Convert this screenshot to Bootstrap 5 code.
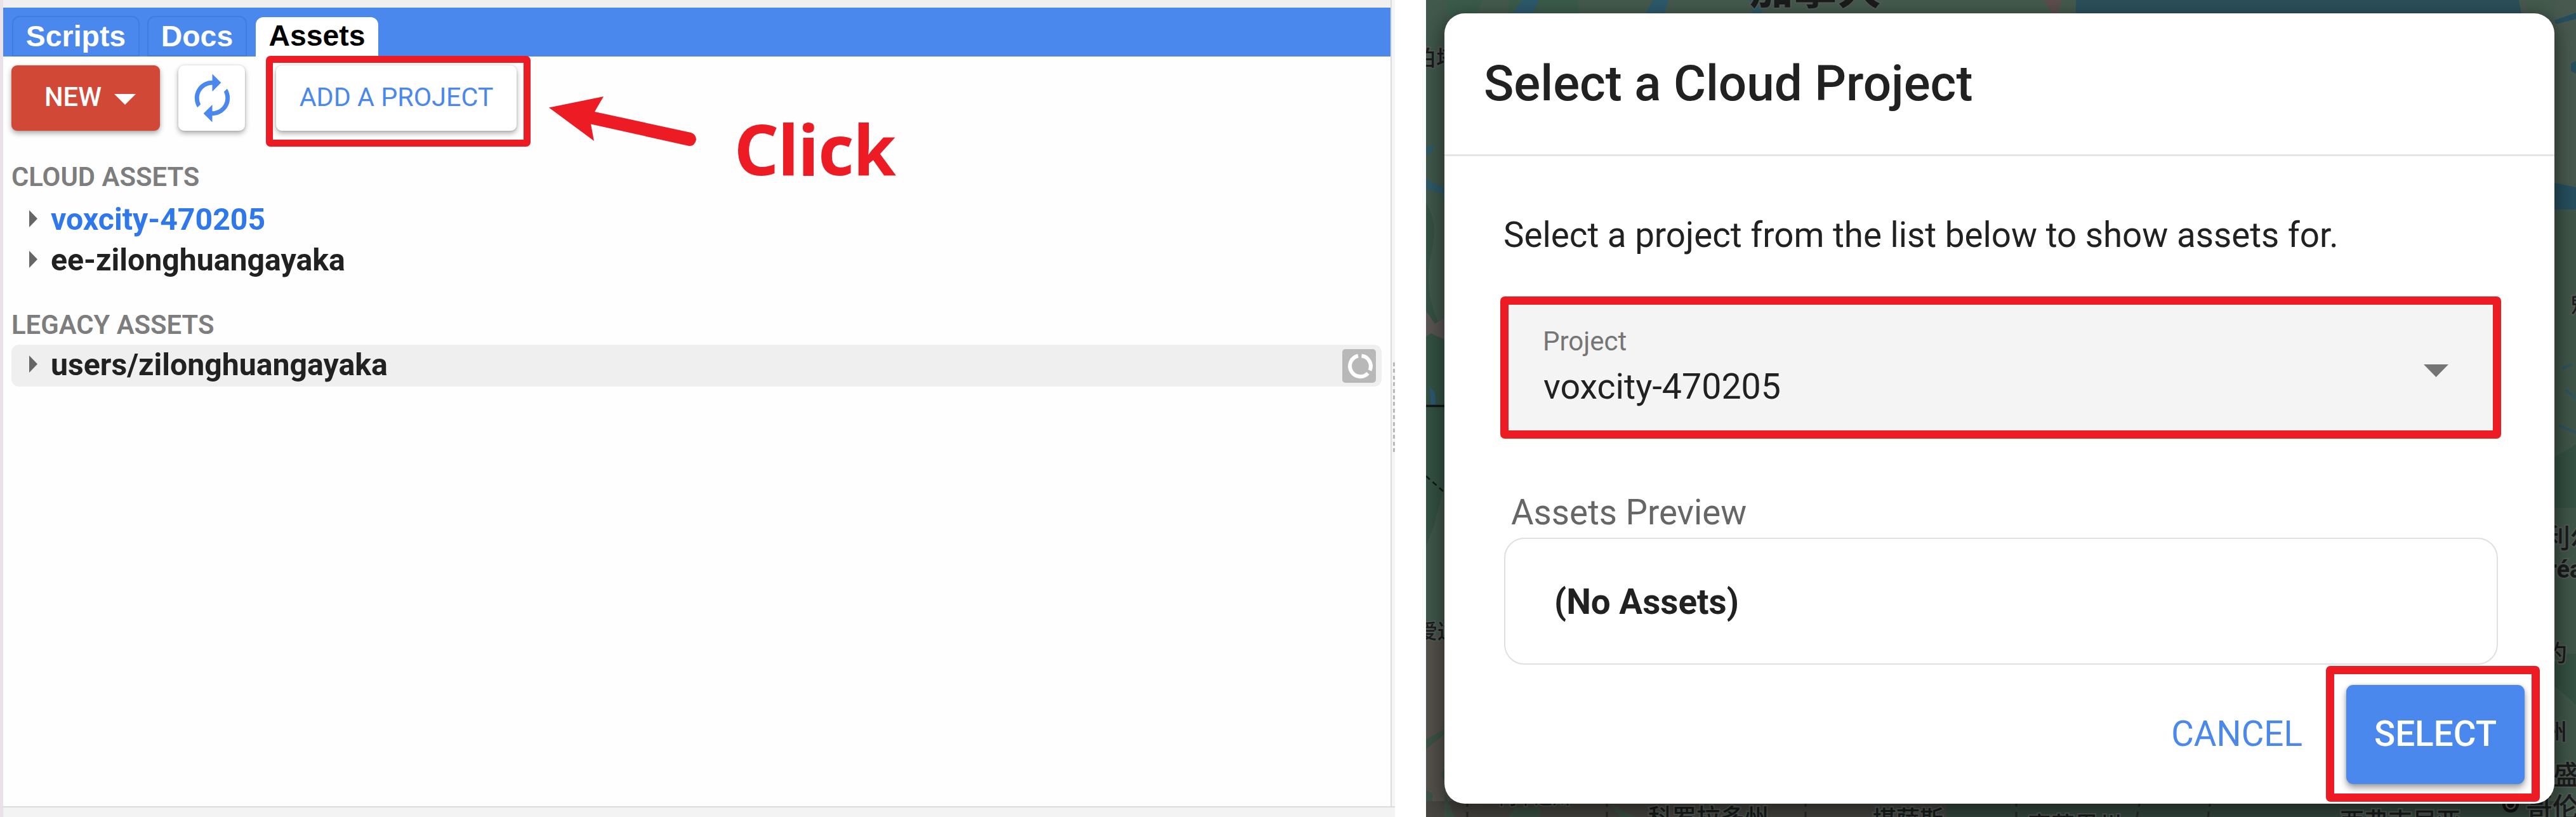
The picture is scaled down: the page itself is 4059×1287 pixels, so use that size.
<!DOCTYPE html>
<html lang="en">
<head>
<meta charset="utf-8">
<title>Add a Cloud Project</title>
<link href="https://cdn.jsdelivr.net/npm/bootstrap@5.3.0/dist/css/bootstrap.min.css" rel="stylesheet">
<style>
  body { font-family: Roboto, "Noto Sans CJK SC", sans-serif; color: #212121; background: #fff; width: 4059px; height: 1287px; overflow: hidden; }
  .split { gap: 49px; height: 1287px; }

  /* left: code editor side panel */
  .side { width: 2198px; background: #fefefe; border-left: 5px solid #ebe1e8; }
  .side-main { border-right: 2px solid #dcdcdc; }
  .top-strip { height: 12px; background: #f0f0f0; }
  .tab-bar { height: 77px; background: #4a88ee; padding-left: 14px; }
  .tab { height: 64px; border: 2px solid #3f7de4; border-radius: 12px 12px 0 0; color: #fff; font: 700 46.4px/60px "Liberation Sans", sans-serif; text-align: center; }
  .tab-scripts { width: 201px; margin-right: 12px; }
  .tab-docs { width: 157px; margin-right: 14px; }
  .tab-assets { width: 193px; height: 62px; background: #fff; border-color: #fff; color: #000; line-height: 55px; }
  .tools { padding: 14px 0 0 13px; }
  .tool { height: 103px; border: 0; border-radius: 9px; padding: 0 0 4px; background: #fff; box-shadow: 0 4px 8px rgba(0,0,0,.33), 0 0 3px rgba(0,0,0,.14); font-size: 41.3px; line-height: 1; color: #4a88ee; }
  .tool-new { width: 234px; background: #d14836; color: #fff; gap: 20px; margin-right: 29px; padding-left: 14px; font-size: 41.8px; font-weight: 500; }
  .tool-sync { width: 105px; padding: 0 0 0 2px; margin-right: 49px; }
  .tool-add { width: 379px; padding-bottom: 2px; }
  .marker { position: absolute; border: 11px solid #ed1c24; border-radius: 7px; pointer-events: none; }
  .marker-add { left: -16px; top: -15px; width: 417px; height: 143px; }
  .group-label { height: 50px; line-height: 52px; font-size: 41.8px; font-weight: 600; color: #7d7d7d; padding-left: 13px; }
  .cloud-label { margin-top: 47px; }
  .cloud-list { margin-top: 12px; }
  .legacy-label { margin-top: 43px; }
  .legacy-list { margin-top: 7px; }
  .asset { height: 64px; margin: 0 14px 0 13px; padding-left: 28px; padding-bottom: 2px; font-size: 48.2px; font-weight: 700; line-height: 1; border-radius: 12px; color: #212121; }
  .asset svg { margin: -4px 21px 0 0; }
  .asset-current { color: #2f78ec; }
  .asset-hover { height: 66px; background: #efefef; padding-right: 9px; }
  .asset-hover .reload { margin: 2px 0 0 auto; }
  .grip { width: 5px; background: #f5f5f5; padding-top: 571px; }
  .grip i { height: 143px; width: 3px; margin-left: 2px; background: repeating-linear-gradient(#b9b9b9 0 6px, #f5f5f5 6px 10.4px); }
  .bottom-strip { height: 17px; background: #f3f3f3; border-top: 2px solid #dcdcdc; }
  .note { position: absolute; left: 860px; top: 140px; width: 560px; height: 160px; }
  .note text { font: 700 109px "Noto Sans", sans-serif; letter-spacing: -1px; }

  /* right: map with dialog */
  .map-side { width: 1812px; background: #42574b; padding: 21px 34px 21px 29px; }
  .map { position: absolute; left: 0; top: 0; }
  .map text { font-family: "Noto Sans CJK SC", Roboto, sans-serif; fill: #191c1b; stroke: #525b56; stroke-width: 4px; paint-order: stroke; font-weight: 500; }
  .dialog { position: relative; width: 1749px; height: 1245px; background: #fff; border-radius: 32px; box-shadow: 0 10px 30px 6px rgba(0,0,0,.42); }
  .dialog-head { height: 225px; border-bottom: 3px solid #e4e4e4; padding: 0 0 1px 62px; font-size: 78.2px; font-weight: 500; line-height: 1; }
  .dialog-body { padding: 94px 89px 0 95px; }
  .hint { height: 60px; line-height: 60px; font-size: 54.7px; margin: 0; text-indent: -2px; }
  .field { margin-top: 74px; height: 211px; background: #f4f4f4; padding: 39px 78px 0 60px; }
  .field-name { height: 50px; line-height: 50px; font-size: 42px; color: #757575; }
  .field-value { margin-top: 17px; height: 60px; line-height: 60px; font-size: 55.5px; padding-left: 1px; }
  .marker-field { left: -7px; top: -7px; width: 1577px; height: 224px; border-width: 13px; }
  .preview-name { margin: 92px 0 0 10px; height: 60px; line-height: 60px; font-size: 54.6px; color: #666; }
  .preview { margin-top: 10px; height: 200px; border: 2px solid #e0e0e0; border-radius: 32px; padding: 2px 0 0 77px; margin-left: -1px; font-size: 54.8px; font-weight: 700; }
  .dialog-foot { padding: 32px 47px 0 0; }
  .act { height: 156px; border: 0; background: none; padding: 0 0 2px; font-size: 54.8px; line-height: 1; color: #4a88ee; }
  .act-cancel { margin-right: 69px; }
  .act-select { width: 281px; background: #4a88ee; color: #fff; border-radius: 11px; font-weight: 500; box-shadow: 0 6px 11px rgba(0,0,0,.38), 0 0 4px rgba(0,0,0,.15); }
  .marker-select { left: -32px; top: -30px; width: 337px; height: 214px; border-width: 13px; }
</style>
</head>
<body>
<div class="split d-flex">

  <section class="side d-flex flex-column position-relative">
    <div class="d-flex flex-grow-1">
      <div class="side-main flex-grow-1">
        <div class="top-strip"></div>
        <nav class="tab-bar d-flex align-items-end">
          <div class="tab tab-scripts">Scripts</div>
          <div class="tab tab-docs">Docs</div>
          <div class="tab tab-assets">Assets</div>
        </nav>
        <div class="tools d-flex">
          <button class="tool tool-new d-flex align-items-center justify-content-center">NEW
            <svg class="mt-2" width="34" height="17"><path d="M0 0H34L17 17Z" fill="#fff"/></svg>
          </button>
          <button class="tool tool-sync d-flex align-items-center justify-content-center" aria-label="Refresh">
            <svg width="83" height="83" viewBox="0 0 24 24"><path fill="#4a88ee" d="M12 4V1l4 4-4 4V6c-3.31 0-6 2.69-6 6 0 1.010.25 1.970.7 2.800l-1.460 1.460C4.460 15.030 4 13.570 4 12c0-4.420 3.580-8 8-8zm0 14c3.310 0 6-2.690 6-6 0-1.010-.25-1.970-.7-2.800l1.460-1.460C19.540 8.970 20 10.430 20 12c0 4.420-3.580 8-8 8v3l-4-4 4-4v3z"/></svg>
          </button>
          <div class="position-relative">
            <button class="tool tool-add">ADD A PROJECT</button>
            <div class="marker marker-add"></div>
          </div>
        </div>

        <div class="group-label cloud-label">CLOUD ASSETS</div>
        <div class="cloud-list">
          <div class="asset asset-current d-flex align-items-center"><svg width="13" height="27"><path d="M0 0L13 13.5L0 27Z" fill="#666"/></svg>voxcity-470205</div>
          <div class="asset d-flex align-items-center"><svg width="13" height="27"><path d="M0 0L13 13.5L0 27Z" fill="#666"/></svg>ee-zilonghuangayaka</div>
        </div>
        <div class="group-label legacy-label">LEGACY ASSETS</div>
        <div class="legacy-list">
          <div class="asset asset-hover d-flex align-items-center"><svg width="13" height="27"><path d="M0 0L13 13.5L0 27Z" fill="#666"/></svg>users/zilonghuangayaka
            <svg class="reload" width="53" height="53"><rect width="53" height="53" rx="5" fill="#b8b8b8"/><path d="M30.500 10.500A16.500 16.500 0 0 1 43.500 33.500M40.500 38A16.500 16.500 0 1 1 25 10.500" fill="none" stroke="#fff" stroke-width="6"/></svg>
          </div>
        </div>
      </div>
      <div class="grip"><i class="d-block"></i></div>
    </div>
    <div class="bottom-strip"></div>

    <svg class="note" viewBox="865 140 560 160">
      <path d="M865 169.500L951 152L937 176L1089 209Q1097 212 1097 220Q1095 230 1086 230L931 195.500L936 222Z" fill="#ed1c24"/>
      <text x="1157" y="276" fill="#ed1c24">Click</text>
    </svg>
  </section>

  <section class="map-side position-relative">
    <svg class="map" width="1812" height="1287">
      <rect width="1812" height="1287" fill="#455a4e"/>
      <path d="M0 0H90L60 60L130 90V0H240V30H0Z" fill="#3b5b4b"/>
      <path d="M0 0H34V1287H0Z" fill="#41584c"/>
      <path d="M0 320Q20 350 8 400T16 500L30 540V760L12 830L0 860Z" fill="#345244"/>
      <path d="M0 490L14 510L30 500V535L18 530L8 525L0 530Z" fill="#5a5654"/>
      <path d="M6 610L14 618L16 640H8Z" fill="#2b5a72"/>
      <path d="M0 232L12 228L10 240L0 244ZM0 282L34 298V308L0 298Z" fill="#2d5a68"/>
      <path d="M0 1000H40V1287H0Z" fill="#55524c"/>
      <path d="M0 1165L30 1148V1156L0 1180ZM24 1220L34 1200V1240ZM0 1245L10 1250V1270L0 1264Z" fill="#3d5347"/>
      <path d="M0 1262H820V1287H0Z" fill="#474540"/>
      <path d="M820 1262H1812V1287H820Z" fill="#36483f"/>
      <path d="M140 1272H180V1287H130ZM290 1266L330 1287H305ZM30 1250L45 1287H28Z" fill="#3c5145"/>
      <path d="M136 22L152 0H178L168 22ZM345 22L358 0H382L375 22ZM510 0H522L530 22H515Z" fill="#2d5a6c"/>
      <path d="M974 0H1003L992 30Z" fill="#5b4e4b"/>
      <path d="M1024 0H1722L1730 40H1024Z" fill="#2b515a"/>
      <path d="M1722 0H1730L1738 30H1728ZM1778 0H1812V287H1778Z" fill="#485a50"/>
      <path d="M1778 32L1812 20V30L1780 38ZM1804 100L1812 96V116L1804 112ZM1778 288L1812 295V330H1778Z" fill="#264f5e"/>
      <path d="M1778 330H1812V1287H1778Z" fill="#405649"/>
      <path d="M1778 720L1812 700V800H1778ZM1778 1030H1812V1110L1778 1080Z" fill="#345143"/>
      <path d="M1790 580L1806 574M1796 614L1810 626M1785 670L1812 682" stroke="#2b5560" stroke-width="4"/>
      <path d="M0 639.500H34" stroke="#121715" stroke-width="3.500"/>
      <path d="M0 750L34 780" stroke="#121715" stroke-width="2.500" stroke-dasharray="8 6"/>
      <path d="M65 1262V1287M285 1262V1287M598 1262V1287M930 1262V1287M1125 1262L1120 1287M1236 1262L1232 1287" stroke="#272b29" stroke-width="3" stroke-dasharray="9 8"/>
      <text x="510" y="7" font-size="69" style="font-weight:700">加拿大</text>
      <text x="-18" y="104" font-size="34">伯塔</text>
      <text x="-14" y="1006" font-size="32">爱达</text>
      <text x="115" y="1267" font-size="28">内华达州</text>
      <text x="350" y="1301" font-size="38">科罗拉多州</text>
      <text x="704" y="1304" font-size="37">堪萨斯</text>
      <text x="948" y="1314" font-size="37">密苏里州</text>
      <text x="1440" y="1307" font-size="38">西弗吉尼亚</text>
      <text x="1804" y="492" font-size="34">魁</text>
      <text x="1761" y="863" font-size="42">利尔</text>
      <text x="1768" y="910" font-size="38" style="font-weight:700;font-family:Roboto,sans-serif">réal</text>
      <text x="1762" y="1042" font-size="36">约</text>
      <text x="1762" y="1166" font-size="36">州</text>
      <text x="1776" y="1236" font-size="42">盛</text>
      <text x="1733" y="1287" font-size="42">哥伦</text>
      <circle cx="1709" cy="1267" r="11" fill="#111" stroke="#111" stroke-width="4"/>
      <circle cx="1709" cy="1267" r="7" fill="none" stroke="#59605c" stroke-width="2.500"/>
    </svg>

    <div class="dialog">
      <div class="dialog-head d-flex align-items-center">Select a Cloud Project</div>
      <div class="dialog-body">
        <p class="hint">Select a project from the list below to show assets for.</p>
        <div class="field position-relative d-flex justify-content-between">
          <div>
            <div class="field-name">Project</div>
            <div class="field-value">voxcity-470205</div>
          </div>
          <svg class="align-self-center" width="39" height="60"><path d="M0 5H39L19.500 25Z" fill="#757575"/></svg>
          <div class="marker marker-field"></div>
        </div>
        <div class="preview-name">Assets Preview</div>
        <div class="preview d-flex align-items-center">(No Assets)</div>
      </div>
      <div class="dialog-foot d-flex justify-content-end">
        <button class="act act-cancel">CANCEL</button>
        <div class="position-relative">
          <button class="act act-select">SELECT</button>
          <div class="marker marker-select"></div>
        </div>
      </div>
    </div>
  </section>
</div>
<script src="https://cdn.jsdelivr.net/npm/bootstrap@5.3.0/dist/js/bootstrap.bundle.min.js"></script>
</body>
</html>
